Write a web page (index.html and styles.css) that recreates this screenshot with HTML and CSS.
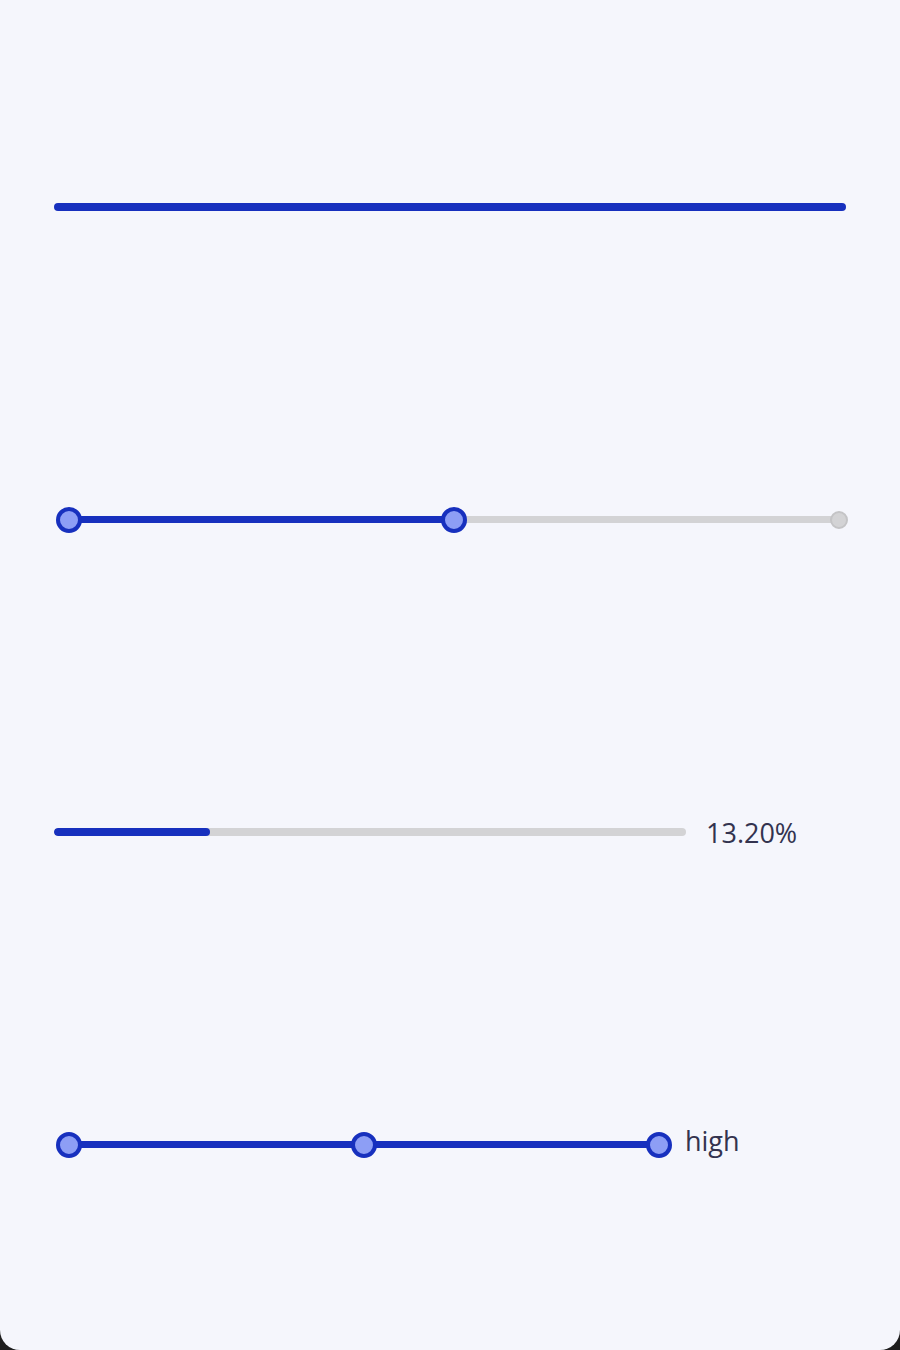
FILE: index.html
```html
<!DOCTYPE html>
<html>
<head>
<meta charset="utf-8">
<link rel="stylesheet" href="styles.css">
</head>
<body>
<div class="page">
  <div class="row">
    <div class="line"></div>
  </div>
  <div class="row">
    <div class="range">
      <div class="range-track"><div class="range-fill" style="width:50%"></div></div>
      <span class="thumb" style="left:15px"></span>
      <span class="thumb" style="left:400px"></span>
      <span class="thumb thumb-end" style="left:785px"></span>
    </div>
  </div>
  <div class="row">
    <div class="progress">
      <div class="bar"><div class="bar-fill" style="width:24.7%"></div></div>
      <span class="label">13.20%</span>
    </div>
  </div>
  <div class="row">
    <div class="steps">
      <div class="steps-slider">
        <div class="steps-track"></div>
        <span class="thumb" style="left:15px"></span>
        <span class="thumb" style="left:310px"></span>
        <span class="thumb" style="left:605px"></span>
      </div>
      <span class="label label-high">high</span>
    </div>
  </div>
</div>
</body>
</html>
```

FILE: styles.css
```css
html, body {
  margin: 0;
  padding: 0;
  background: #1e1e1e;
}
.page {
  width: 900px;
  height: 1350px;
  box-sizing: border-box;
  background: #f5f6fc;
  border-radius: 0 0 20px 20px;
  padding: 51px 54px 49px;
  display: grid;
  grid-template-rows: repeat(4, 1fr);
  font-family: "Open Sans", "Noto Sans", sans-serif;
  color: #33334f;
}
.row {
  display: flex;
  align-items: center;
}
.line {
  width: 100%;
  height: 8px;
  border-radius: 4px;
  background: #1730be;
}
.range {
  position: relative;
  width: 100%;
  height: 26px;
  display: flex;
  align-items: center;
}
.range-track {
  margin-left: 15px;
  margin-right: 7px;
  flex: 1;
  height: 7px;
  border-radius: 4px;
  background: #d3d3d5;
  overflow: hidden;
}
.range-fill {
  height: 100%;
  background: #1730be;
}
.thumb {
  position: absolute;
  top: 50%;
  width: 18px;
  height: 18px;
  margin: -13px 0 0 -13px;
  border: 4px solid #1730be;
  border-radius: 50%;
  background: #8d9ef5;
}
.thumb-end {
  width: 14px;
  height: 14px;
  margin: -9px 0 0 -9px;
  border: 2px solid #c4c4c6;
  background: #d3d3d5;
}
.progress {
  width: 100%;
  display: flex;
  align-items: center;
}
.bar {
  width: 632px;
  height: 8px;
  border-radius: 4px;
  background: #d3d3d5;
  overflow: hidden;
}
.bar-fill {
  height: 100%;
  border-radius: 4px;
  background: #1730be;
}
.label {
  font-size: 27px;
  line-height: 1;
  margin-left: 20px;
}
.steps {
  width: 100%;
  display: flex;
  align-items: center;
}
.steps-slider {
  position: relative;
  width: 618px;
  height: 26px;
  display: flex;
  align-items: center;
}
.steps-track {
  margin-left: 15px;
  margin-right: 13px;
  flex: 1;
  height: 7px;
  background: #1730be;
}
.label-high {
  margin-left: 13px;
  margin-top: -8px;
}
```
